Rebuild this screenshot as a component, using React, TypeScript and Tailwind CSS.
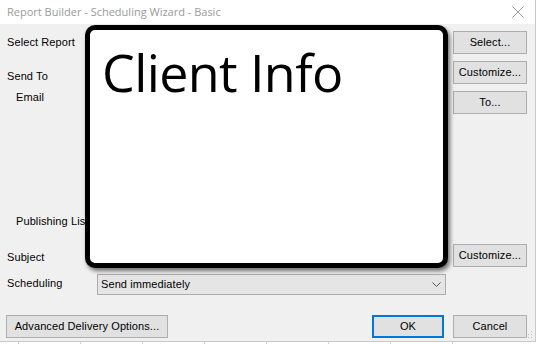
import React from "react";

const Btn: React.FC<{ label: string; className?: string }> = ({ label, className = "" }) => (
  <button
    className={`h-[23px] border border-[#adadad] bg-[#e1e1e1] text-[11px] tracking-[0.1px] text-black flex items-center justify-center ${className}`}
  >
    {label}
  </button>
);

export default function App() {
  return (
    <div className="w-[536px] h-[344px] bg-white overflow-hidden relative font-['Liberation_Sans',Arial,sans-serif]">
      <div className="w-[536px] h-[342px] flex flex-col border-r border-b border-[#c9c9c9]">
        {/* Title bar */}
        <div className="h-[24px] bg-white flex items-center justify-between pl-[7px] pr-[11px] shrink-0">
          <span className="text-[11px] text-[#9a9a9a] font-['Open_Sans',sans-serif]">
            Report Builder - Scheduling Wizard - Basic
          </span>
          <svg width="12" height="12" viewBox="0 0 12 12">
            <path d="M0.5 0.5 L11.5 11.5 M11.5 0.5 L0.5 11.5" stroke="#9a9a9a" strokeWidth="1" />
          </svg>
        </div>

        {/* Body */}
        <div className="flex-1 bg-[#f0f0f0] flex flex-col pl-[7px] pr-[8px] relative text-[11px] tracking-[0.1px]">
          <div className="mt-[7px] h-[23px] flex items-center justify-between">
            <span>Select Report</span>
            <Btn label="Select..." className="w-[74px]" />
          </div>
          <div className="mt-[7px] h-[23px] flex items-center justify-between">
            <span className="pt-[7px]">Send To</span>
            <Btn label="Customize..." className="w-[74px]" />
          </div>
          <div className="mt-[7px] h-[23px] flex items-start justify-between">
            <span className="pl-[9px] leading-[12px]">Email</span>
            <Btn label="To..." className="w-[74px]" />
          </div>
          <div className="mt-[95px] h-[23px] flex items-center">
            <span className="pl-[9px] pt-[1px]">Publishing List</span>
          </div>
          <div className="mt-[12px] h-[23px] flex items-center justify-between">
            <span className="pt-[4px]">Subject</span>
            <Btn label="Customize..." className="w-[74px]" />
          </div>
          <div className="mt-[7px] h-[21px] flex items-center">
            <span className="w-[90px] -mt-[3px]">Scheduling</span>
            <div className="w-[349px] h-[21px] border border-[#acacac] bg-[#e5e5e5] flex items-center justify-between pl-[3px] pr-[4px]">
              <span>Send immediately</span>
              <svg width="9" height="6" viewBox="0 0 9 6">
                <path d="M0.5 0.5 L4.5 4.5 L8.5 0.5" stroke="#555" fill="none" strokeWidth="1" />
              </svg>
            </div>
          </div>
          <div className="mt-[20px] h-[23px] flex items-center">
            <Btn label="Advanced Delivery Options..." className="w-[162px] -ml-[1px]" />
            <div className="flex-1" />
            <button className="w-[72px] h-[23px] border-2 border-[#0078d7] bg-[#e1e1e1] text-black flex items-center justify-center">
              OK
            </button>
            <Btn label="Cancel" className="w-[74px] ml-[9px]" />
          </div>

          {/* resize grip */}
          <svg className="absolute right-[2px] bottom-[2px]" width="8" height="8" viewBox="0 0 8 8">
            <rect x="6" y="0" width="1" height="1" fill="#bcbcbc" />
            <rect x="3" y="3" width="1" height="1" fill="#bcbcbc" />
            <rect x="6" y="3" width="1" height="1" fill="#bcbcbc" />
            <rect x="0" y="6" width="1" height="1" fill="#bcbcbc" />
            <rect x="3" y="6" width="1" height="1" fill="#bcbcbc" />
            <rect x="6" y="6" width="1" height="1" fill="#bcbcbc" />
          </svg>
        </div>
      </div>

      {/* spreadsheet strip behind the window */}
      <div className="h-[2px] flex">
        {Array.from({ length: 9 }).map((_, i) => (
          <div key={i} className="w-[62px] h-[2px] border-l border-[#d4d4d4] first:w-[18px] first:border-l-0" />
        ))}
      </div>

      {/* Client Info overlay */}
      <div className="absolute left-[85px] top-[25px] w-[363px] h-[243px] border-[5px] border-black rounded-[10px] bg-white shadow-[2px_3px_4px_rgba(0,0,0,0.55)] pl-[12px] pt-[16px]">
        <span className="text-[52px] leading-none tracking-[-0.6px] text-black font-['Open_Sans',sans-serif]">Client Info</span>
      </div>
    </div>
  );
}
